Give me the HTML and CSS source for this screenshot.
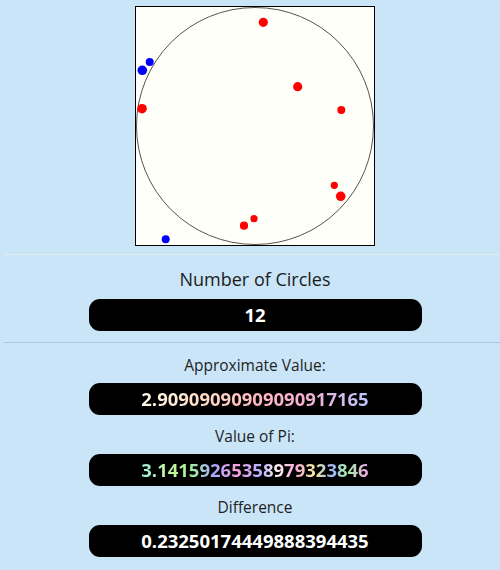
FILE: index.html
```html
<!DOCTYPE html>
<html lang="en">
<head>
<meta charset="utf-8">
<title>Monte Carlo Pi</title>
<link rel="stylesheet" href="styles.css">
</head>
<body>
<main class="page">
  <div class="board-wrap">
    <svg class="board" width="238" height="238" viewBox="0 0 238 238">
      <circle cx="119" cy="119" r="118.5" fill="none" stroke="#55554a" stroke-width="1"/>
      <circle cx="127.3" cy="15.3" r="4.6" fill="#ff0000"/>
      <circle cx="13.7" cy="55" r="4" fill="#0000ff"/>
      <circle cx="6.3" cy="63.3" r="4.8" fill="#0000ff"/>
      <circle cx="6" cy="101.7" r="4.8" fill="#ff0000"/>
      <circle cx="161.7" cy="79.7" r="4.6" fill="#ff0000"/>
      <circle cx="205.3" cy="103" r="4" fill="#ff0000"/>
      <circle cx="198.3" cy="178.3" r="3.6" fill="#ff0000"/>
      <circle cx="204.7" cy="189.3" r="4.8" fill="#ff0000"/>
      <circle cx="118" cy="211.7" r="3.6" fill="#ff0000"/>
      <circle cx="108" cy="218.7" r="4.1" fill="#ff0000"/>
      <circle cx="29.7" cy="232.3" r="4" fill="#0000ff"/>
    </svg>
  </div>
  <hr class="sep sep-light">
  <section class="field field-main">
    <h2 class="heading">Number of Circles</h2>
    <div class="pill">12</div>
  </section>
  <hr class="sep sep-dark">
  <section class="field">
    <h3 class="label">Approximate Value:</h3>
    <div class="pill"><span class="grad grad-approx">2.90909090909090917165</span></div>
  </section>
  <section class="field">
    <h3 class="label">Value of Pi:</h3>
    <div class="pill"><span class="grad grad-pi">3.14159265358979323846</span></div>
  </section>
  <section class="field">
    <h3 class="label">Difference</h3>
    <div class="pill">0.23250174449888394435</div>
  </section>
</main>
</body>
</html>
```

FILE: styles.css
```css
html, body {
  margin: 0;
  padding: 0;
}
body {
  background: #c9e5f7;
  font-family: "Open Sans", "Noto Sans", sans-serif;
  color: #1f1f1f;
}
.page {
  display: flex;
  flex-direction: column;
  padding: 6px 0 0 10px;
}
.board-wrap {
  display: flex;
  justify-content: center;
}
.board {
  display: block;
  border: 1px solid #000;
  background: #fffffa;
}
.sep {
  border: 0;
  height: 1px;
  margin: 0 0 0 -6px;
}
.sep-light {
  background: #e2efe6;
  margin-top: 8px;
}
.sep-dark {
  background: #adc6e2;
  margin-top: 11px;
}
.field {
  display: flex;
  flex-direction: column;
  align-items: center;
  gap: 7px;
  margin-top: 10px;
}
.sep-dark + .field {
  margin-top: 11px;
}
.field-main {
  margin-top: 12px;
  gap: 8px;
}
.heading {
  margin: 0;
  font-size: 18px;
  line-height: 24px;
  font-weight: 500;
  color: #1c1c1c;
}
.label {
  margin: 0;
  font-size: 15.5px;
  line-height: 22px;
  font-weight: 500;
  color: #1f1f1f;
}
.pill {
  width: 333px;
  height: 32px;
  border-radius: 11px;
  background: #000;
  color: #fff;
  font-size: 18.5px;
  font-weight: 700;
  line-height: 32px;
  text-align: center;
}
.grad {
  -webkit-background-clip: text;
  background-clip: text;
  color: transparent;
}
.grad-approx {
  background-image: linear-gradient(90deg, #fffbe8 0%, #ffe0c8 25%, #ffb8c0 50%, #f5b0d0 72%, #b8c4ff 100%);
}
.grad-pi {
  background-image: linear-gradient(90deg, #98f0e0 0%, #c8f59a 12%, #a0f0a0 22%, #a8a8ff 32%, #f5a0e0 42%, #b8b0ff 52%, #fff0f0 60%, #f8a8d8 68%, #f0f098 76%, #a0b8ff 84%, #a8f0a8 90%, #f0a0e8 100%);
}
```
